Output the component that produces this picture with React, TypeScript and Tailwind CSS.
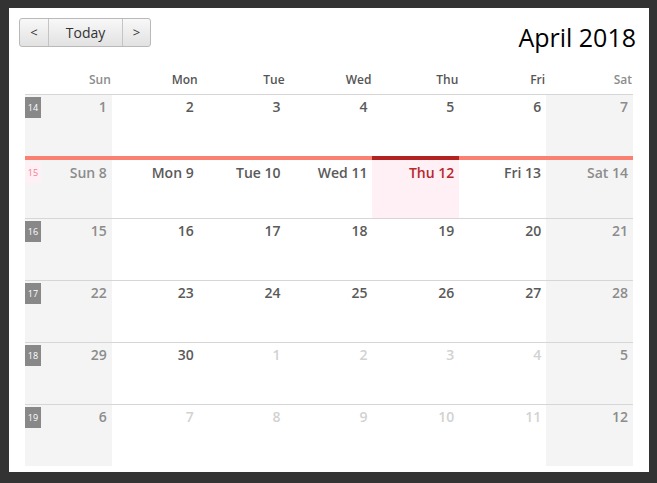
import React from "react";

const dayNames = ["Sun", "Mon", "Tue", "Wed", "Thu", "Fri", "Sat"];
const weekNumbers = [14, 15, 16, 17, 18, 19];
const todayWeek = 1;
const todayCol = 4;

function WeekRow({ row }: { row: number }) {
  const isTodayWeek = row === todayWeek;
  return (
    <div className="grid grid-cols-7">
      {dayNames.map((name, c) => {
        const d = 1 + row * 7 + c;
        const inMonth = d <= 30;
        const dayNum = inMonth ? d : d - 30;
        const weekend = c === 0 || c === 6;
        const isToday = isTodayWeek && c === todayCol;

        let cellCls = "h-[62px] flex items-start justify-between ";
        if (isTodayWeek) {
          cellCls += isToday
            ? "border-t-4 border-[#b22222] bg-[#fff0f5] "
            : "border-t-4 border-[#fa8072] ";
        } else {
          cellCls += "border-t border-[#d6d6d6] ";
        }
        if (weekend && !isToday) cellCls += "bg-[#f4f4f4] ";

        let textCls = "text-[#5a5a5a]";
        if (weekend) textCls = "text-[#8c8c8c]";
        else if (!inMonth) textCls = "text-[#d2d2d2]";
        if (isToday) textCls = "text-[#b8282c]";

        return (
          <div key={c} className={cellCls}>
            {c === 0 &&
              (isTodayWeek ? (
                <span className="mt-[2px] w-[16px] h-[21px] leading-[21px] text-center text-[9px] bg-[#fff0f5] text-[#f67c92]">
                  {weekNumbers[row]}
                </span>
              ) : (
                <span className="mt-[2px] w-[16px] h-[21px] leading-[21px] text-center text-[9px] bg-[#888888] text-white">
                  {weekNumbers[row]}
                </span>
              ))}
            <span
              className={`ml-auto text-sm font-semibold leading-[18px] pr-[5px] ${
                isTodayWeek ? "pt-[4px]" : "pt-[3px]"
              } ${textCls}`}
            >
              {isTodayWeek ? `${name} ${dayNum}` : dayNum}
            </span>
          </div>
        );
      })}
    </div>
  );
}

export default function App() {
  return (
    <div
      className="h-[483px] bg-[#333333] pt-[8px] pl-[9px] pr-[8px] pb-[11px]"
      style={{ fontFamily: '"Open Sans", "Noto Sans", sans-serif' }}
    >
      <div className="h-full bg-white pt-[10px] px-[16px]">
        <div className="h-[50px] flex justify-between items-start">
          <div className="-ml-[6px] flex h-[29px] rounded-[3px] border border-[#b9b9b9] bg-linear-to-b from-[#f8f8f8] to-[#e2e2e2] text-[#333333] text-sm">
            <button className="w-[28px] flex items-center justify-center text-[13px]">
              &lt;
            </button>
            <button className="w-[74px] flex items-center justify-center border-l border-[#c4c4c4]">
              Today
            </button>
            <button className="w-[28px] flex items-center justify-center border-l border-[#c4c4c4] text-[13px]">
              &gt;
            </button>
          </div>
          <h2 className="text-[25px] leading-[36px] mt-[1px] -mr-[3px] text-black">
            April 2018
          </h2>
        </div>
        <div className="grid grid-cols-7 h-[26px] pt-[4px]">
          {dayNames.map((n, i) => (
            <div
              key={n}
              className={`text-right text-xs font-semibold leading-4 pr-[1px] ${
                i === 0 || i === 6 ? "text-[#8c8c8c]" : "text-[#555555]"
              }`}
            >
              {n}
            </div>
          ))}
        </div>
        {weekNumbers.map((_, r) => (
          <WeekRow key={r} row={r} />
        ))}
      </div>
    </div>
  );
}
